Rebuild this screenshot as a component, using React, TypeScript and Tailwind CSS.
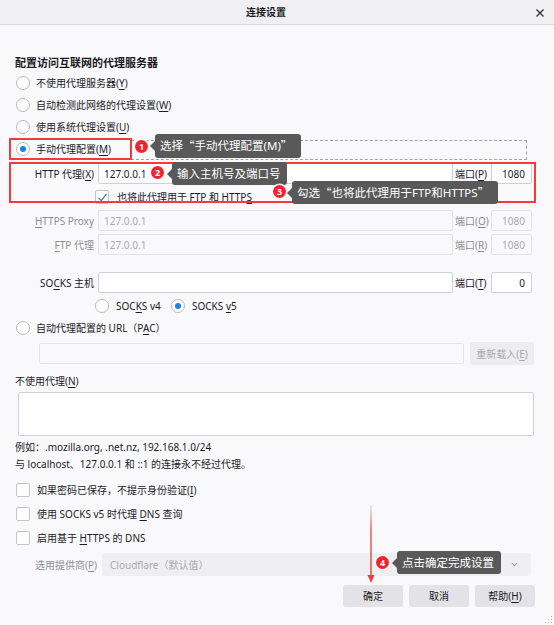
import React from "react";

function U({ children }: { children: React.ReactNode }) {
  return <span className="underline decoration-[1px] underline-offset-[2px]">{children}</span>;
}

// full-width CJK quotation marks
function Q({ children }: { children: React.ReactNode }) {
  return <span className="font-['Noto_Sans_CJK_SC',sans-serif]">{children}</span>;
}

function Radio({ checked = false }: { checked?: boolean }) {
  return (
    <span className="flex h-[14px] w-[14px] shrink-0 items-center justify-center rounded-full border border-[#b9b9c0] bg-white">
      {checked && <span className="h-[6px] w-[6px] rounded-full bg-[#1a84e0]" />}
    </span>
  );
}

function Check({ checked = false }: { checked?: boolean }) {
  return (
    <span className="flex h-[14px] w-[14px] shrink-0 items-center justify-center rounded-[2px] border border-[#c4c4ca] bg-white">
      {checked && (
        <svg width="11" height="11" viewBox="0 0 11 11">
          <path d="M1.6 5.8 L4.3 8.6 L9.6 1.8" fill="none" stroke="#3078cc" strokeWidth="1.2" />
        </svg>
      )}
    </span>
  );
}

function RadioRow({ checked, children }: { checked?: boolean; children: React.ReactNode }) {
  return (
    <div className="flex h-[22px] items-center pl-[1px]">
      <Radio checked={checked} />
      <span className="ml-[6px]">{children}</span>
    </div>
  );
}

function ProxyRow({
  label,
  host,
  portLabel,
  port,
  disabled = false,
  className = "",
}: {
  label: React.ReactNode;
  host: string;
  portLabel: React.ReactNode;
  port: string;
  disabled?: boolean;
  className?: string;
}) {
  const box = disabled
    ? "border-[#e4e4e8] bg-[#f9f9fb] text-[#a9a9ae]"
    : "border-[#cfcfd6] bg-white text-[#1b1b1f]";
  return (
    <div className={`flex h-[21px] items-center ${className}`}>
      <span className={`w-[79px] text-right whitespace-nowrap ${disabled ? "text-[#8e8e94]" : ""}`}>{label}</span>
      <div className={`ml-[4px] flex h-full w-[355px] items-center rounded-[2px] border px-[5px] ${box}`}>{host}</div>
      <span className={`ml-[2px] w-[35px] whitespace-nowrap ${disabled ? "text-[#8e8e94]" : ""}`}>{portLabel}</span>
      <div className={`ml-[1px] flex h-full w-[41px] items-center justify-end rounded-[2px] border pr-[6px] ${box}`}>{port}</div>
    </div>
  );
}

function CheckRow({ children }: { children: React.ReactNode }) {
  return (
    <div className="flex h-[24px] items-center pl-[1px]">
      <Check />
      <span className="ml-[7px]">{children}</span>
    </div>
  );
}

function Badge({ n, className }: { n: string; className: string }) {
  return (
    <span
      className={`absolute flex h-[13px] w-[13px] items-center justify-center rounded-full bg-[#f5222d] text-[9px] font-bold leading-none text-white shadow-[0_0_0_1.5px_rgba(255,255,255,0.85)] ${className}`}
    >
      {n}
    </span>
  );
}

function Tip({ children, className }: { children: React.ReactNode; className: string }) {
  return (
    <div
      className={`absolute flex items-center rounded-[3px] bg-[#595959] pl-[5px] text-[11.5px] leading-none whitespace-nowrap text-white ${className}`}
    >
      <span className="absolute top-1/2 left-[-5px] -translate-y-1/2 border-y-[5px] border-r-[5px] border-y-transparent border-r-[#595959]" />
      {children}
    </div>
  );
}

export default function App() {
  return (
    <div className="relative h-[625px] w-[554px] overflow-hidden bg-[#f9f9fb] font-['Noto_Sans','Noto_Sans_CJK_SC',sans-serif] text-[10px] leading-none text-[#1b1b1f]">
      {/* title bar */}
      <div className="relative flex h-[25px] items-center justify-center border-b border-[#dadadd] bg-[#f0f0f2] pr-[22px]">
        <span className="text-[10px] font-semibold">连接设置</span>
        <svg className="absolute top-[9px] left-[536px]" width="8" height="8" viewBox="0 0 8 8">
          <path d="M0.5 0.5 L7.5 7.5 M7.5 0.5 L0.5 7.5" stroke="#2b2b2b" strokeWidth="1.2" />
        </svg>
      </div>

      {/* dialog body */}
      <div className="flex flex-col px-[15px] pt-[30px]">
        <div className="h-[15px] text-[11px] leading-[15px] font-bold">配置访问互联网的代理服务器</div>
        <div className="mt-[2px] flex flex-col">
          <RadioRow>
            不使用代理服务器(<U>Y</U>)
          </RadioRow>
          <RadioRow>
            自动检测此网络的代理设置(<U>W</U>)
          </RadioRow>
          <RadioRow>
            使用系统代理设置(<U>U</U>)
          </RadioRow>
          <RadioRow checked>
            手动代理配置(<U>M</U>)
          </RadioRow>
        </div>

        <ProxyRow
          className="mt-[3px]"
          label={
            <>
              HTTP 代理(<U>X</U>)
            </>
          }
          host="127.0.0.1"
          portLabel={
            <>
              端口(<U>P</U>)
            </>
          }
          port="1080"
        />
        <div className="mt-[2px] flex h-[22px] items-center pl-[80px]">
          <Check checked />
          <span className="ml-[8px]">
            也将此代理用于 FTP 和 HTTP<U>S</U>
          </span>
        </div>
        <ProxyRow
          className="mt-[2px]"
          disabled
          label={
            <>
              <U>H</U>TTPS Proxy
            </>
          }
          host="127.0.0.1"
          portLabel={
            <>
              端口(<U>O</U>)
            </>
          }
          port="1080"
        />
        <ProxyRow
          className="mt-[3px]"
          disabled
          label={
            <>
              <U>F</U>TP 代理
            </>
          }
          host="127.0.0.1"
          portLabel={
            <>
              端口(<U>R</U>)
            </>
          }
          port="1080"
        />
        <ProxyRow
          className="mt-[17px]"
          label={
            <>
              SO<U>C</U>KS 主机
            </>
          }
          host=""
          portLabel={
            <>
              端口(<U>T</U>)
            </>
          }
          port="0"
        />
        <div className="mt-[2px] flex h-[22px] items-center pl-[80px]">
          <div className="flex w-[76px] items-center">
            <Radio />
            <span className="ml-[7px]">
              SOC<U>K</U>S v4
            </span>
          </div>
          <div className="flex items-center">
            <Radio checked />
            <span className="ml-[7px]">
              SOCKS <U>v</U>5
            </span>
          </div>
        </div>
        <RadioRow>
          自动代理配置的 URL（P<U>A</U>C）
        </RadioRow>
        <div className="mt-[3px] flex h-[23px] items-center pl-[24px]">
          <div className="h-[21px] w-[425px] rounded-[2px] border border-[#e4e4e8] bg-[#f9f9fb]" />
          <div className="ml-[6px] flex h-full w-[64px] items-center justify-center rounded-[3px] bg-[#ededf0] text-[#a9a9ae]">
            重新载入(<U>E</U>)
          </div>
        </div>

        <div className="mt-[8px] h-[16px] leading-[16px]">
          不使用代理(<U>N</U>)
        </div>
        <div className="mt-[3px] ml-[3px] h-[44px] w-[516px] rounded-[2px] border border-[#cfcfd6] bg-white" />
        <div className="mt-[3px] h-[16px] leading-[16px]">例如：.mozilla.org, .net.nz, 192.168.1.0/24</div>
        <div className="mt-[1px] h-[16px] leading-[16px]">与 localhost、127.0.0.1 和 ::1 的连接永不经过代理。</div>

        <div className="mt-[6px] flex flex-col">
          <CheckRow>
            如果密码已保存，不提示身份验证(<U>I</U>)
          </CheckRow>
          <CheckRow>
            使用 SOCKS v5 时代理 <U>D</U>NS 查询
          </CheckRow>
          <CheckRow>
            启用基于 <U>H</U>TTPS 的 DNS
          </CheckRow>
        </div>

        <div className="mt-[3px] flex h-[23px] items-center">
          <span className="ml-[20px] w-[67px] text-[#8e8e94]">
            选用提供商(<U>P</U>)
          </span>
          <div className="flex h-full w-[429px] items-center justify-between rounded-[3px] bg-[#efeff1] pr-[13px] pl-[8px] text-[#a9a9ae]">
            <span>Cloudflare（默认值）</span>
            <svg width="7" height="5" viewBox="0 0 7 5">
              <path d="M0.8 1 L3.5 3.8 L6.2 1" fill="none" stroke="#8a8a90" strokeWidth="1" />
            </svg>
          </div>
        </div>

        <div className="mt-[9px] flex h-[22px] gap-[6px] pl-[328px]">
          <div className="flex w-[60px] items-center justify-center rounded-[3px] bg-[#e3e3e7]">确定</div>
          <div className="flex w-[60px] items-center justify-center rounded-[3px] bg-[#e3e3e7]">取消</div>
          <div className="flex w-[60px] items-center justify-center rounded-[3px] bg-[#e3e3e7]">
            帮助(<U>H</U>)
          </div>
        </div>
      </div>

      {/* resize grip */}
      <svg className="absolute top-[615px] left-[544px]" width="9" height="9" viewBox="0 0 9 9">
        <g fill="#b4b4b8">
          <rect x="7" y="1" width="1" height="1" />
          <rect x="4" y="4" width="1" height="1" />
          <rect x="7" y="4" width="1" height="1" />
          <rect x="1" y="7" width="1" height="1" />
          <rect x="4" y="7" width="1" height="1" />
          <rect x="7" y="7" width="1" height="1" />
        </g>
      </svg>

      {/* annotations */}
      <div className="absolute top-[140px] left-[131px] h-[20px] w-[396px] border border-dashed border-[#a3a3a3]" />
      <div className="absolute top-[138px] left-[9px] h-[22px] w-[123px] border-2 border-[#f03c3c]" />
      <div className="absolute top-[162px] left-[9px] h-[41px] w-[527px] border-2 border-[#f03c3c]" />

      <Badge n="1" className="top-[140px] left-[135px]" />
      <Tip className="top-[134px] left-[155px] h-[24px] w-[146px]">
        选择<Q>“</Q>手动代理配置(M)<Q>”</Q>
      </Tip>

      <Badge n="2" className="top-[166px] left-[151px]" />
      <Tip className="top-[162px] left-[172px] h-[23px] w-[115px]">输入主机号及端口号</Tip>

      <Badge n="3" className="top-[185px] left-[273px]" />
      <Tip className="top-[181px] left-[292px] h-[23px] w-[206px]">
        勾选<Q>“</Q>也将此代理用于FTP和HTTPS<Q>”</Q>
      </Tip>

      <svg className="absolute top-[505px] left-[366px]" width="10" height="80" viewBox="0 0 10 80">
        <defs>
          <linearGradient id="arrowFade" x1="0" y1="0" x2="0" y2="1">
            <stop offset="0" stopColor="#f03c3c" stopOpacity="0.15" />
            <stop offset="0.35" stopColor="#f03c3c" stopOpacity="0.9" />
            <stop offset="1" stopColor="#f03c3c" stopOpacity="1" />
          </linearGradient>
        </defs>
        <rect x="4.3" y="0" width="1.4" height="72" fill="url(#arrowFade)" />
        <polygon points="1.5,70 8.5,70 5,78" fill="#f03c3c" />
      </svg>

      <Badge n="4" className="top-[556px] left-[376px]" />
      <Tip className="top-[551px] left-[397px] h-[23px] w-[104px]">点击确定完成设置</Tip>
    </div>
  );
}
